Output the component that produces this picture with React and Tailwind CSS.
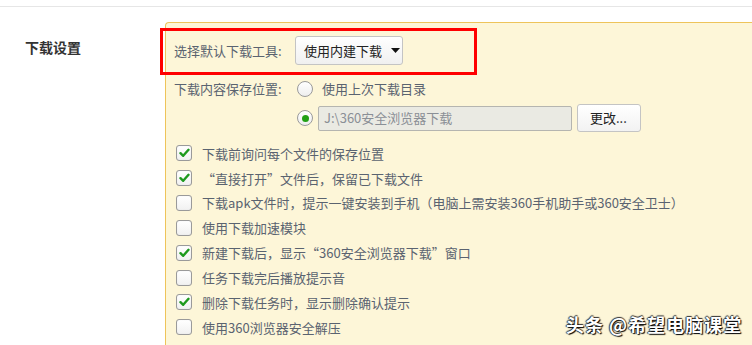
import React from "react";

const font = { fontFamily: '"Noto Sans CJK SC", "Noto Sans", sans-serif' };

function Check({ checked }) {
  return (
    <span className="w-[16px] h-[16px] rounded-[3px] border border-[#9a9a9a] bg-gradient-to-b from-white to-[#f1f1f1] flex items-center justify-center shrink-0 shadow-[inset_0_0_1px_rgba(0,0,0,0.15)]">
      {checked && (
        <svg width="11" height="10" viewBox="0 0 11 10">
          <path d="M1.5 5.2 L4.2 7.8 L9.5 1.8" fill="none" stroke="#1e9a1e" strokeWidth="2.4" strokeLinecap="round" strokeLinejoin="round" />
        </svg>
      )}
    </span>
  );
}

function Radio({ checked }) {
  return (
    <span className="w-[16px] h-[16px] rounded-full border border-[#9a9a9a] bg-gradient-to-b from-white to-[#eeeeee] flex items-center justify-center shrink-0">
      {checked && <span className="w-[7px] h-[7px] rounded-full bg-[#22a014]" />}
    </span>
  );
}

const items = [
  [true, "下载前询问每个文件的保存位置"],
  [true, "“直接打开”文件后，保留已下载文件"],
  [false, "下载apk文件时，提示一键安装到手机（电脑上需安装360手机助手或360安全卫士）"],
  [false, "使用下载加速模块"],
  [true, "新建下载后，显示“360安全浏览器下载”窗口"],
  [false, "任务下载完后播放提示音"],
  [true, "删除下载任务时，显示删除确认提示"],
  [false, "使用360浏览器安全解压"],
];

export default function App() {
  return (
    <div className="relative w-[752px] h-[345px] overflow-hidden bg-white" style={font}>
      <div className="h-[6px]" />
      <div className="border-t border-[#e6e6e6]" />
      <div className="flex">
        <div className="w-[165px] shrink-0 pl-[25px] pt-[30px] text-[14px] font-bold text-[#333] leading-[20px]">
          下载设置
        </div>
        <div className="mt-[15px] flex-1 h-[400px] bg-[#fdf6d8] border-t border-l border-[#eec45a] rounded-tl-[4px] pl-[8px] pt-[13px] text-[13px] text-[#5a6370]">
          <div className="flex items-center h-[29px]">
            <div className="w-[121px] shrink-0 leading-[18px]">选择默认下载工具:</div>
            <div className="h-[29px] w-[108px] border border-[#c4c4c4] rounded-[3px] bg-gradient-to-b from-white to-[#f0f0f0] flex items-center pl-[8px] gap-[9px] text-[#222]">
              <span>使用内建下载</span>
              <svg width="9" height="5" viewBox="0 0 9 5"><path d="M0 0 H9 L4.5 5 Z" fill="#111" /></svg>
            </div>
          </div>
          <div className="flex items-center h-[24px] mt-[12px]">
            <div className="w-[123px] shrink-0 leading-[18px]">下载内容保存位置:</div>
            <Radio />
            <span className="ml-[9px]">使用上次下载目录</span>
          </div>
          <div className="flex items-center h-[28px] mt-[3px]">
            <div className="w-[123px] shrink-0" />
            <Radio checked />
            <div className="ml-[5px] w-[254px] h-[25px] border border-[#b5b5b0] rounded-[2px] bg-[#eaeae3] flex items-center pl-[5px] text-[#8a8f96]">
              J:\360安全浏览器下载
            </div>
            <div className="ml-[5px] w-[64px] h-[28px] border border-[#c4c4c4] rounded-[3px] bg-gradient-to-b from-white to-[#f2f2f2] flex items-center pl-[12px] text-[#222]">
              更改...
            </div>
          </div>
          <div className="mt-[9px] flex flex-col">
            {items.map(([c, t], i) => (
              <div key={i} className="flex items-center h-[24.85px] pl-[2px]">
                <Check checked={c} />
                <span className="ml-[10px] whitespace-nowrap">{t}</span>
              </div>
            ))}
          </div>
        </div>
      </div>
      <div className="absolute left-[160px] top-[28px] w-[317px] h-[47px] border-[3px] border-[#ff0000]" />
      <div className="absolute left-[566px] top-[312px] text-[18px] leading-[24px] font-bold text-white tracking-[1px] [text-shadow:1px_1px_1px_#000,-1px_0_1px_#333,0_-1px_1px_#333]">
        头条 @希望电脑课堂
      </div>
    </div>
  );
}
